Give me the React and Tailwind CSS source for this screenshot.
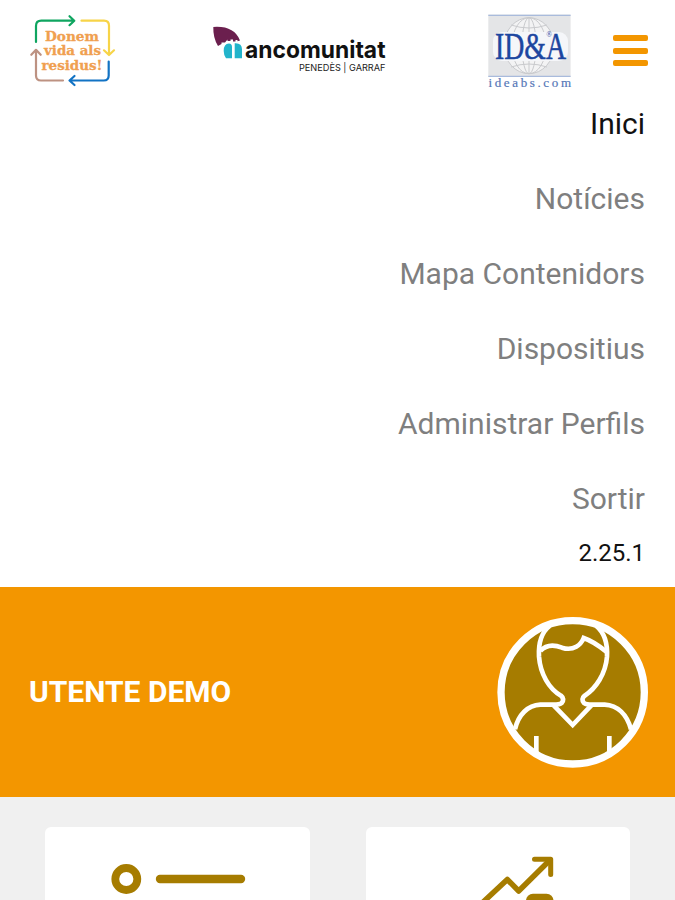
import React from "react";

const menuItems = [
  { label: "Inici", active: true },
  { label: "Notícies" },
  { label: "Mapa Contenidors" },
  { label: "Dispositius" },
  { label: "Administrar Perfils" },
  { label: "Sortir" },
];

function ResidusLogo() {
  return (
    <svg viewBox="28 12 90 76" className="w-[90px] h-[76px]" fill="none">
      <g strokeWidth="2.200" strokeLinecap="round" strokeLinejoin="round">
        <path
          stroke="#0fa560"
          d="M36 42V26q0-5.300 5.300-5.300H74M69.500 16.200l4.800 4.500-4.800 4.500"
        />
        <path
          stroke="#f7d448"
          d="M81.500 20.700H104q5 0 5 5V54.500M104 50.300l5 4.700 5-4.700"
        />
        <path
          stroke="#1273c4"
          d="M108.700 61.500V75.500q0 5-5 5H70M74.500 76l-5 4.500 5 4.500"
        />
        <path
          stroke="#bd9282"
          d="M63 80.500H41q-5 0-5-5V50M31.300 54.800l4.700-5 4.700 5"
        />
      </g>
      <g
        fill="#f0a050"
        stroke="#f0a050"
        strokeWidth="0.300"
        fontFamily="DejaVu Serif, serif"
        fontWeight="700"
        fontSize="13"
      >
        <text x="45" y="41" textLength="54" lengthAdjust="spacingAndGlyphs">
          Donem
        </text>
        <text x="44" y="55.300" textLength="57" lengthAdjust="spacingAndGlyphs">
          vida als
        </text>
        <text x="41.500" y="69.600" textLength="61" lengthAdjust="spacingAndGlyphs">
          residus!
        </text>
      </g>
    </svg>
  );
}

function MancomunitatLogo() {
  return (
    <svg viewBox="210 22 180 54" className="w-[180px] h-[54px] overflow-visible">
      <path
        fill="#6b1f4e"
        d="M213.300 27Q234 25.500 240 40.500L237.500 41.200V40H235.500V41.500H233V39.500H230.500V41H227.500V39.500L225 42.500H221.500V44L218 46Q213 38 213.300 27z"
      />
      <path
        fill="#22b4cb"
        d="M226 58.300Q223.700 55 223.700 51 223.700 43.500 229 43.500 232 43.500 232 47v11.300zM234.700 58.300V43.200q7.300-.5 7.300 6v9.100z"
      />
      <text
        x="245"
        y="58.300"
        textLength="140.500"
        lengthAdjust="spacingAndGlyphs"
        fill="#111"
        fontFamily="Inter, sans-serif"
        fontWeight="700"
        fontSize="24"
      >
        ancomunitat
      </text>
      <text
        x="299"
        y="71"
        textLength="86.500"
        lengthAdjust="spacingAndGlyphs"
        fill="#222"
        fontFamily="Inter, sans-serif"
        fontSize="9.300"
      >
        PENEDÈS | GARRAF
      </text>
    </svg>
  );
}

function IdeabsLogo() {
  return (
    <svg viewBox="487 13 86 77" className="w-[86px] h-[77px] overflow-visible">
      <rect x="488.300" y="14.500" width="82.300" height="62.500" fill="#e4e5e7" />
      <path d="M488.300 15.300h82.300M488.300 76.300h82.300" stroke="#a9bbdc" strokeWidth="1.300" />
      <g fill="none" stroke="#c9cacd" strokeWidth="1">
        <ellipse cx="529" cy="45.700" rx="25" ry="28" fill="#f3f3f4" />
        <ellipse cx="529" cy="45.700" rx="17" ry="28" />
        <ellipse cx="529" cy="45.700" rx="7" ry="28" />
        <path d="M529 18v56M511 25q18 6 36 0M511 67q18-6 36 0" />
      </g>
      <rect x="493" y="32" width="75" height="29" rx="9" fill="#f5f6f9" />
      <text
        x="495"
        y="58.700"
        textLength="71"
        lengthAdjust="spacingAndGlyphs"
        fill="#1d46a0"
        stroke="#1d46a0"
        strokeWidth="0.500"
        fontFamily="Liberation Serif, serif"
        fontSize="38"
      >
        ID&amp;A
      </text>
      <text x="546.300" y="37" fill="#1d46a0" fontFamily="Liberation Serif, serif" fontSize="7.500">
        ®
      </text>
      <text
        x="488.500"
        y="86.800"
        textLength="82.500"
        fill="#5577b8"
        stroke="#5577b8"
        strokeWidth="0.200"
        fontFamily="Liberation Serif, serif"
        fontSize="13"
      >
        ideabs.com
      </text>
    </svg>
  );
}

function Avatar() {
  return (
    <svg viewBox="20 19 453 453" className="w-[151px] h-[151px]" fill="none">
      <circle cx="247" cy="245" r="215" fill="#a67c00" stroke="#fff" strokeWidth="22" />
      <g stroke="#fff" strokeWidth="14">
        <path d="M178 46C152 66 144 100 146 138C150 190 176 234 212 255Q224 265 214 277Q208 282 190 282H150C112 284 84 312 74 356" />
        <path d="M318 46C342 66 352 100 350 138C346 190 316 234 283 255Q271 265 281 277Q287 282 305 282H343C382 284 410 312 422 356" />
        <path d="M190 284L247 343L303 284" />
        <path d="M150 121C170 99 195 103 215 111C250 122 272 102 280 82C303 90 325 104 349 124" />
        <path d="M138 376v50M357 376v50" />
      </g>
    </svg>
  );
}

function ListCard() {
  return (
    <svg viewBox="45 827 265 73" className="w-[265px] h-[73px]" fill="none" stroke="#a67c00">
      <circle cx="126.300" cy="879" r="11" strokeWidth="7.800" />
      <path d="M160 879h81" strokeWidth="8.400" strokeLinecap="round" />
    </svg>
  );
}

function ChartCard() {
  return (
    <svg viewBox="366 827 264 73" className="w-[264px] h-[73px]" fill="none" stroke="#a67c00">
      <path
        d="M480 905L507.300 879.500L518.700 891L549 861"
        strokeWidth="5.500"
        strokeLinejoin="round"
      />
      <path
        d="M534.500 859.300H550.700V874.500"
        strokeWidth="5"
        strokeLinecap="round"
        strokeLinejoin="round"
      />
      <rect x="526" y="893.700" width="27.500" height="20" rx="7" fill="#a67c00" stroke="none" />
    </svg>
  );
}

function App() {
  return (
    <div className="flex flex-col w-[675px] h-[900px] overflow-hidden bg-white font-[Roboto,sans-serif]">
      <header className="flex items-start h-[86px] shrink-0">
        <div className="ml-7 mt-3">
          <ResidusLogo />
        </div>
        <div className="ml-[92px] mt-[22px]">
          <MancomunitatLogo />
        </div>
        <div className="ml-[97px] mt-[13px]">
          <IdeabsLogo />
        </div>
        <button className="flex flex-col gap-[6.500px] ml-10 mt-[35px]" aria-label="Menu">
          <span className="w-[35px] h-[6px] rounded-[2px] bg-[#f39600]" />
          <span className="w-[35px] h-[6px] rounded-[2px] bg-[#f39600]" />
          <span className="w-[35px] h-[6px] rounded-[2px] bg-[#f39600]" />
        </button>
      </header>
      <nav className="flex flex-col items-end h-[501px] shrink-0 pr-[30px]">
        {menuItems.map((item) => (
          <a
            key={item.label}
            className={
              item.active
                ? "flex items-center h-[75px] text-3xl text-[#111]"
                : "flex items-center h-[75px] text-3xl text-[#7f7f7f]"
            }
          >
            {item.label}
          </a>
        ))}
        <p className="mt-px text-2xl leading-8 text-[#111]">2.25.1</p>
      </nav>
      <section className="flex items-center justify-between h-[210px] shrink-0 pl-[29px] pr-[27px] bg-[#f39600]">
        <h1 className="text-3xl font-bold text-white">UTENTE DEMO</h1>
        <Avatar />
      </section>
      <main className="flex gap-14 grow pl-[45px] pt-[30px] bg-[#f0f0f0]">
        <div className="h-[120px] bg-white rounded-md">
          <ListCard />
        </div>
        <div className="h-[120px] bg-white rounded-md">
          <ChartCard />
        </div>
      </main>
    </div>
  );
}

export default App;
